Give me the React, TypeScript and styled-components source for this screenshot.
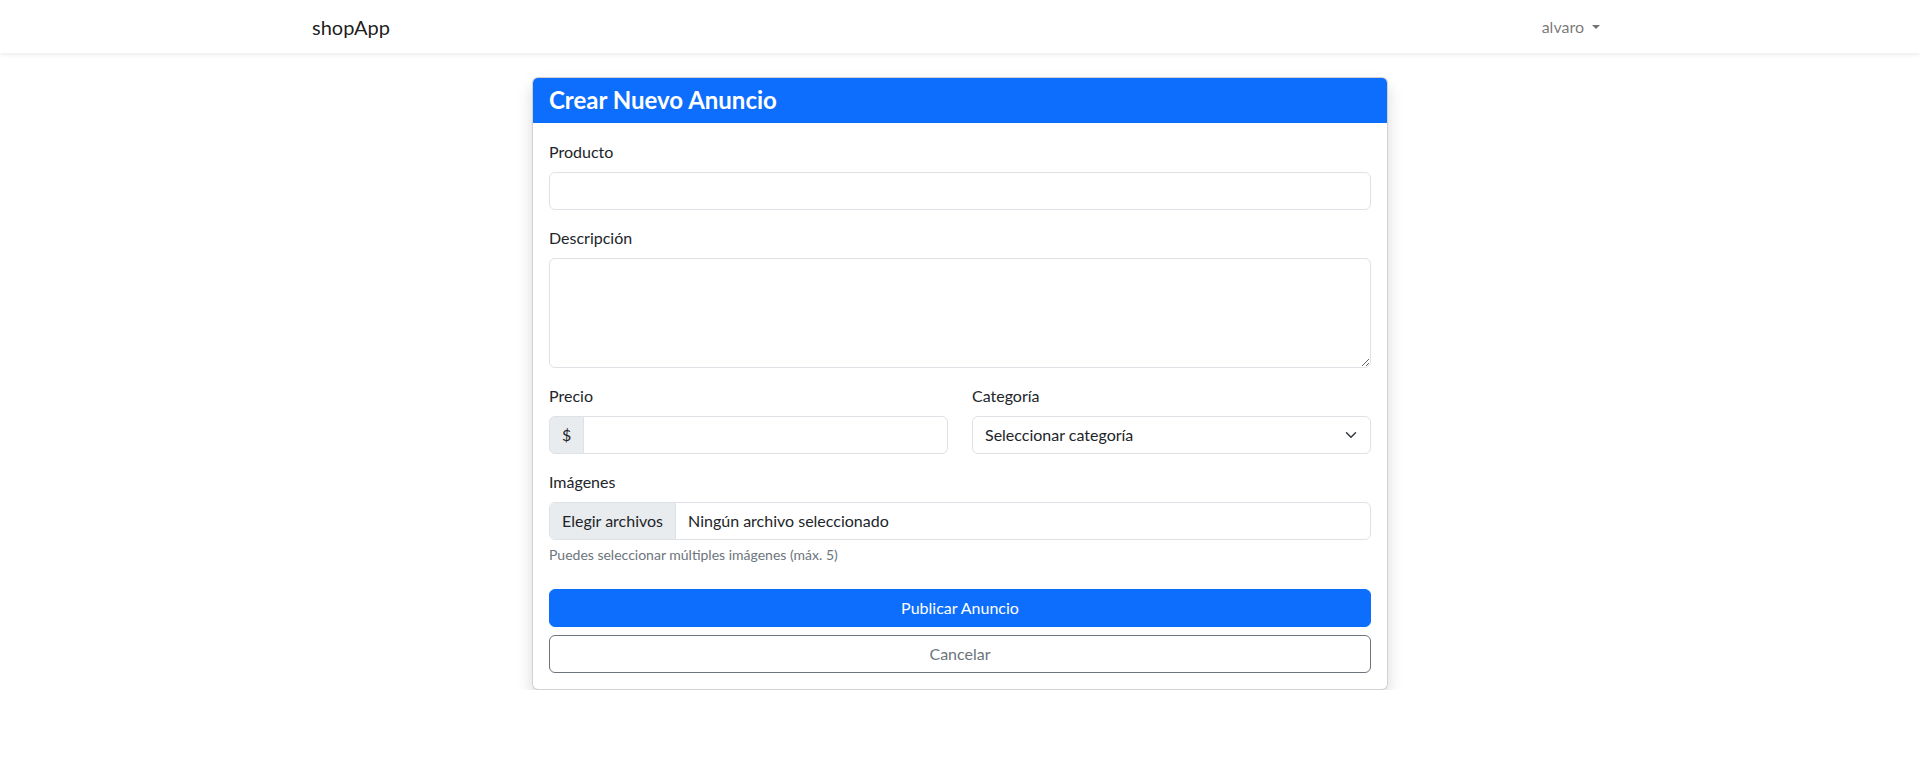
import React from "react";
import styled, { createGlobalStyle } from "styled-components";

const Global = createGlobalStyle`
  * { box-sizing: border-box; }
  body {
    margin: 0;
    background: #fff;
    color: #212529;
    font-family: Lato, "Noto Sans", sans-serif;
    font-size: 16px;
    line-height: 1.5;
  }
`;

const NavBar = styled.nav`
  height: 53px;
  background: #fff;
  box-shadow: 0 0.125rem 0.25rem rgba(0, 0, 0, 0.075);
  display: flex;
  justify-content: center;
`;

const NavInner = styled.div`
  width: 1320px;
  padding: 0 12px;
  display: flex;
  align-items: center;
  justify-content: space-between;
`;

const Brand = styled.a`
  font-size: 20px;
  line-height: 30px;
  color: rgba(0, 0, 0, 0.9);
  text-decoration: none;
`;

const UserLink = styled.a`
  padding: 8px;
  color: rgba(0, 0, 0, 0.55);
  text-decoration: none;
  display: flex;
  align-items: center;
  &::after {
    content: "";
    display: inline-block;
    margin-left: 8px;
    border-top: 0.3em solid;
    border-right: 0.3em solid transparent;
    border-left: 0.3em solid transparent;
    border-bottom: 0;
  }
`;

const Main = styled.main`
  display: flex;
  justify-content: center;
  padding-top: 24px;
`;

const Card = styled.div`
  width: 856px;
  border: 1px solid rgba(0, 0, 0, 0.175);
  border-radius: 6px;
  box-shadow: 0 0.5rem 1rem rgba(0, 0, 0, 0.15);
  background: #fff;
`;

const CardHeader = styled.div`
  background: #0d6efd;
  color: #fff;
  padding: 8px 16px;
  border-radius: 5px 5px 0 0;
`;

const Title = styled.h4`
  margin: 0;
  font-size: 24px;
  font-weight: 700;
  line-height: 1.2;
`;

const CardBody = styled.form`
  padding: 17px 16px 16px;
`;

const Group = styled.div<{ $mb?: number }>`
  margin-bottom: ${(p) => p.$mb ?? 16}px;
  min-width: 0;
`;

const Row = styled.div`
  display: grid;
  grid-template-columns: 1fr 1fr;
  column-gap: 24px;
`;

const Label = styled.label`
  display: block;
  margin-bottom: 8px;
`;

const Control = styled.input`
  display: block;
  width: 100%;
  height: 38px;
  padding: 6px 12px;
  font: inherit;
  color: #212529;
  background: #fff;
  border: 1px solid #dee2e6;
  border-radius: 6px;
  outline: none;
`;

const TextArea = styled.textarea`
  display: block;
  width: 100%;
  height: 110px;
  padding: 6px 12px;
  font: inherit;
  color: #212529;
  border: 1px solid #dee2e6;
  border-radius: 6px;
  resize: vertical;
  outline: none;
`;

const InputGroup = styled.div`
  display: flex;
  height: 38px;
`;

const Addon = styled.span`
  display: flex;
  align-items: center;
  padding: 6px 12px;
  background: #e9ecef;
  border: 1px solid #dee2e6;
  border-radius: 6px 0 0 6px;
  color: #212529;
`;

const GroupControl = styled(Control)`
  flex: 1;
  min-width: 0;
  margin-left: -1px;
  border-radius: 0 6px 6px 0;
`;

const SelectWrap = styled.div`
  position: relative;
`;

const Select = styled.select`
  display: block;
  width: 100%;
  height: 38px;
  padding: 6px 36px 6px 12px;
  font: inherit;
  color: #212529;
  background: #fff;
  border: 1px solid #dee2e6;
  border-radius: 6px;
  appearance: none;
  outline: none;
`;

const Chevron = styled.svg`
  position: absolute;
  right: 12px;
  top: 13px;
  width: 16px;
  height: 12px;
  pointer-events: none;
`;

const FileBox = styled.div`
  display: flex;
  height: 38px;
  border: 1px solid #dee2e6;
  border-radius: 6px;
  overflow: hidden;
`;

const FileButton = styled.span`
  display: flex;
  align-items: center;
  padding: 0 12px;
  background: #e9ecef;
  border-right: 1px solid #dee2e6;
  color: #212529;
`;

const FileName = styled.span`
  display: flex;
  align-items: center;
  padding: 0 12px;
`;

const Help = styled.div`
  margin-top: 4px;
  font-size: 14px;
  color: #6c757d;
`;

const Buttons = styled.div`
  display: grid;
  gap: 8px;
`;

const Button = styled.button<{ $variant: "primary" | "outline" }>`
  height: 38px;
  font: inherit;
  border-radius: 6px;
  border: 1px solid ${(p) => (p.$variant === "primary" ? "#0d6efd" : "#6c757d")};
  background: ${(p) => (p.$variant === "primary" ? "#0d6efd" : "transparent")};
  color: ${(p) => (p.$variant === "primary" ? "#fff" : "#6c757d")};
  cursor: pointer;
`;

export default function App() {
  return (
    <>
      <Global />
      <NavBar>
        <NavInner>
          <Brand href="#">shopApp</Brand>
          <UserLink href="#">alvaro</UserLink>
        </NavInner>
      </NavBar>
      <Main>
        <Card>
          <CardHeader>
            <Title>Crear Nuevo Anuncio</Title>
          </CardHeader>
          <CardBody onSubmit={(e) => e.preventDefault()}>
            <Group>
              <Label>Producto</Label>
              <Control type="text" />
            </Group>
            <Group>
              <Label>Descripción</Label>
              <TextArea rows={4} />
            </Group>
            <Row>
              <Group>
                <Label>Precio</Label>
                <InputGroup>
                  <Addon>$</Addon>
                  <GroupControl type="text" />
                </InputGroup>
              </Group>
              <Group>
                <Label>Categoría</Label>
                <SelectWrap>
                  <Select defaultValue="">
                    <option value="">Seleccionar categoría</option>
                  </Select>
                  <Chevron viewBox="0 0 16 16">
                    <path
                      fill="none"
                      stroke="#343a40"
                      strokeLinecap="round"
                      strokeLinejoin="round"
                      strokeWidth="2"
                      d="m2 5 6 6 6-6"
                    />
                  </Chevron>
                </SelectWrap>
              </Group>
            </Row>
            <Group $mb={24}>
              <Label>Imágenes</Label>
              <FileBox>
                <FileButton>Elegir archivos</FileButton>
                <FileName>Ningún archivo seleccionado</FileName>
              </FileBox>
              <Help>Puedes seleccionar múltiples imágenes (máx. 5)</Help>
            </Group>
            <Buttons>
              <Button type="submit" $variant="primary">Publicar Anuncio</Button>
              <Button type="button" $variant="outline">Cancelar</Button>
            </Buttons>
          </CardBody>
        </Card>
      </Main>
    </>
  );
}
